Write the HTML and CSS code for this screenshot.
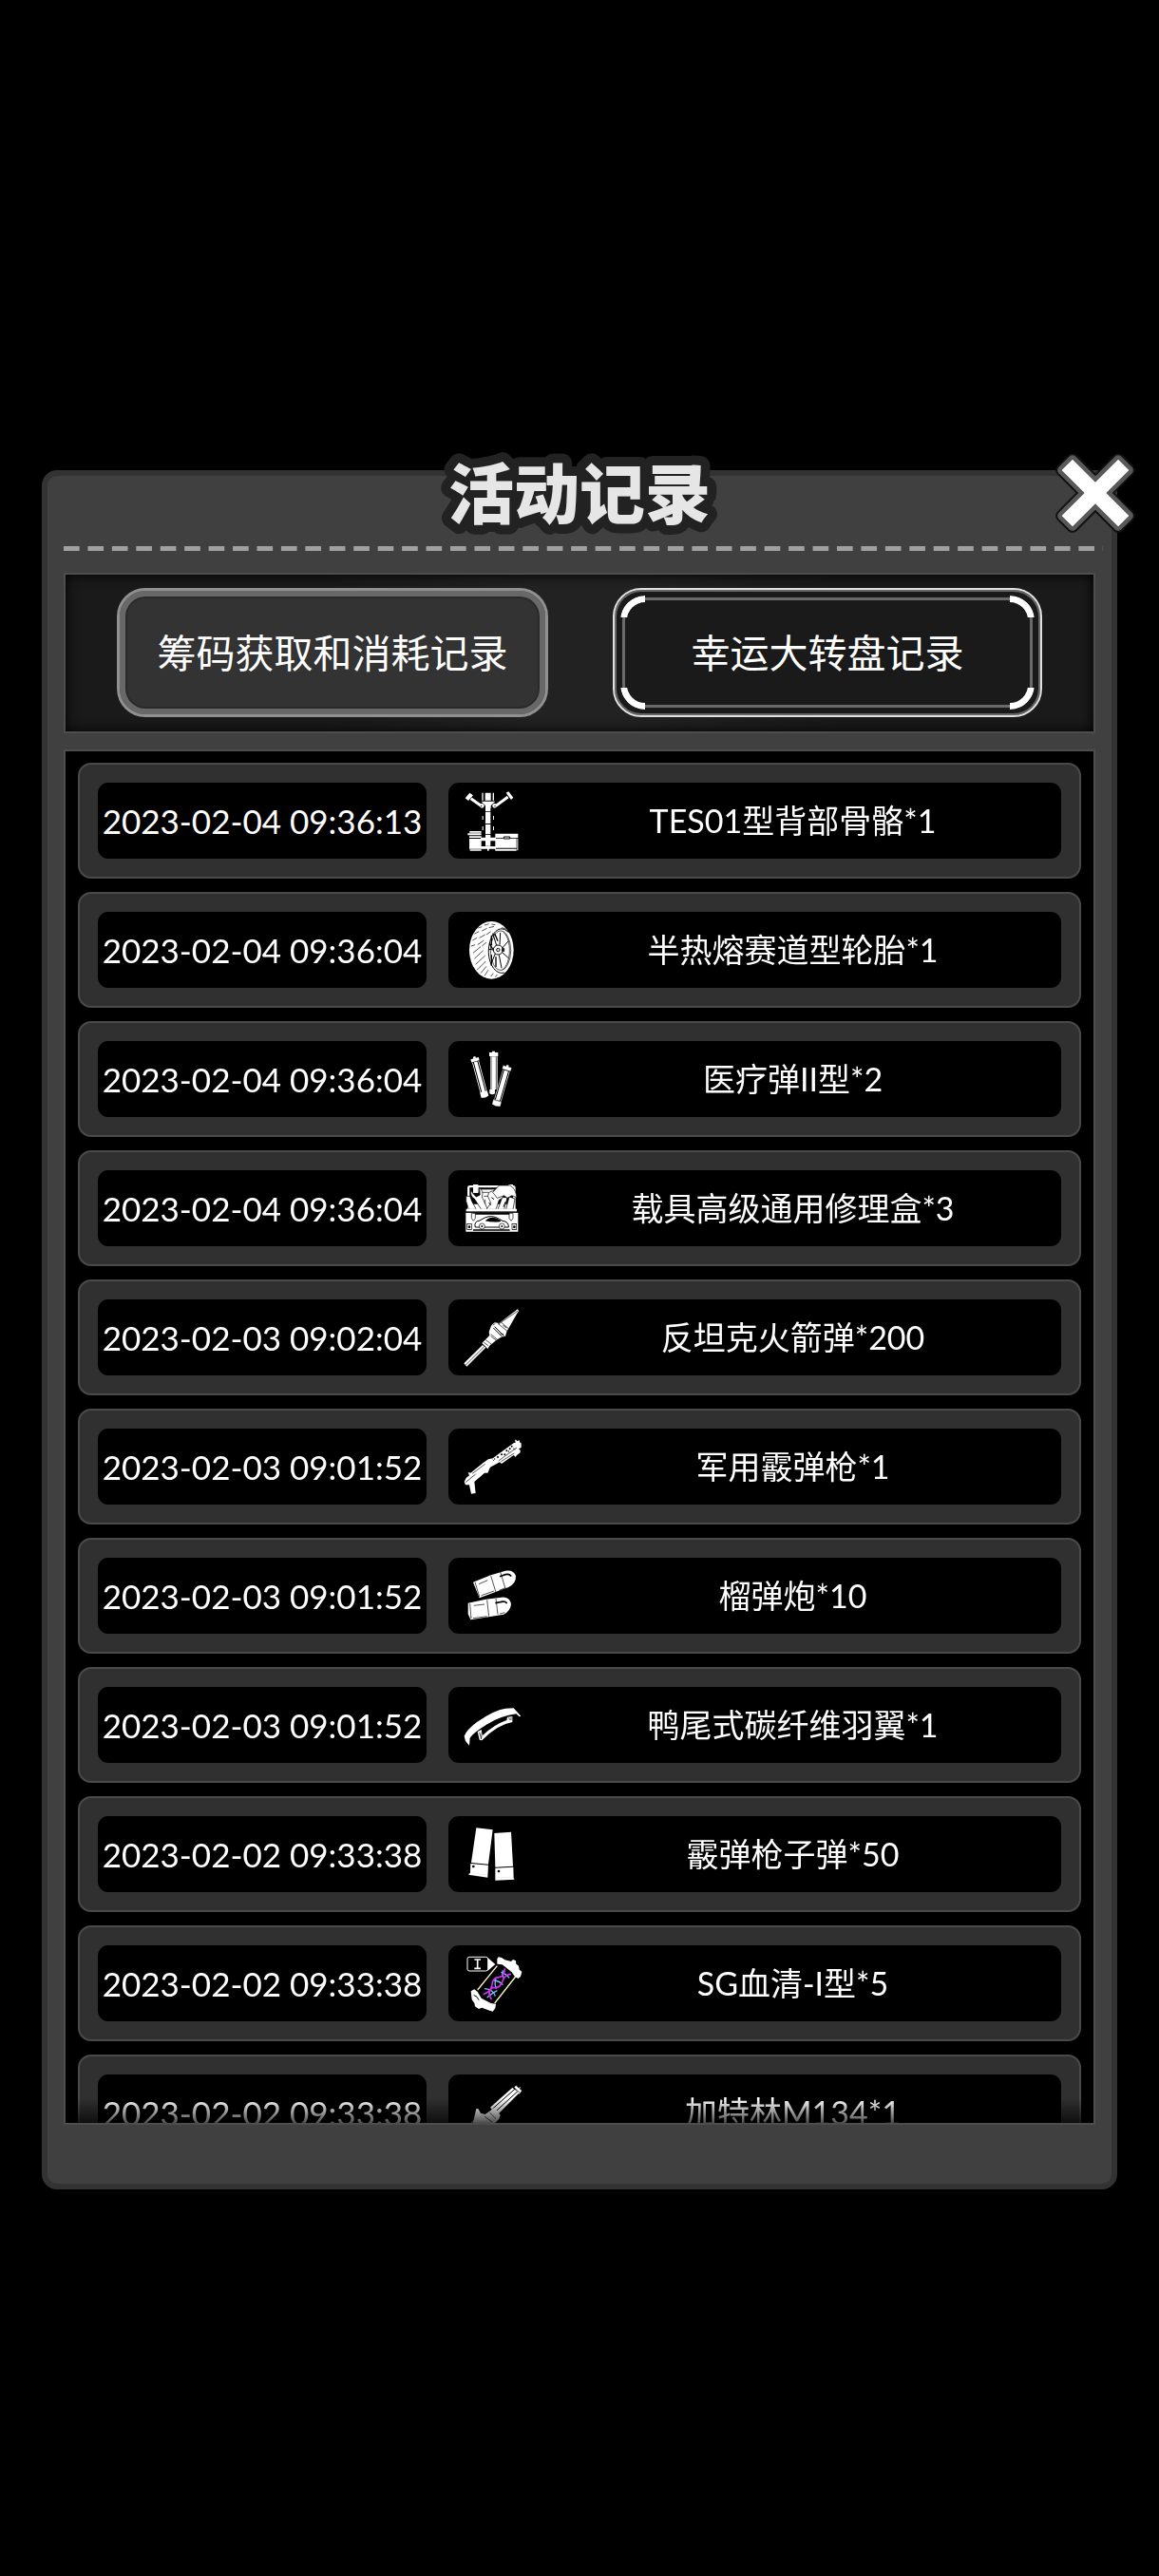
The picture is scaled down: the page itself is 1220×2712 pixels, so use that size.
FILE: index.html
```html
<!DOCTYPE html>
<html lang="zh-CN">
<head>
	<meta charset="UTF-8">
	<meta name="viewport" content="width=device-width, initial-scale=1">
	<title>活动记录</title>
	<link rel="stylesheet" href="styles.css">
</head>
<body>
	<main class="panel">
		<h1 class="title">
			<svg width="100%" height="38"><text x="50%" y="45" text-anchor="middle">活动记录</text></svg>
		</h1>
		<button class="close" aria-label="关闭">
			<svg viewBox="-42 -42 84 84" width="84" height="84">
				<g transform="rotate(45)" stroke-linejoin="round">
					<path d="M-8-42H8V-8H42V8H8V42H-8V8H-42V-8H-8Z" fill="#111" stroke="#111" stroke-width="13"/>
					<path d="M-8-42H8V-8H42V8H8V42H-8V8H-42V-8H-8Z" fill="#555" stroke="#595959" stroke-width="9"/>
					<path d="M-8-42H8V-8H42V8H8V42H-8V8H-42V-8H-8Z" fill="#fff"/>
				</g>
			</svg>
		</button>
		<div class="dashes"></div>

		<div class="tabs">
			<button class="tab tab-plain">筹码获取和消耗记录</button>
			<button class="tab tab-active"><span class="corners"></span>幸运大转盘记录</button>
		</div>

		<div class="list-box">
			<ul class="list">
				<li class="row">
					<time class="cell time">2023-02-04 09:36:13</time>
					<div class="cell item">
						<svg class="icon" viewBox="54 37 192 192" fill="#fff">
							<path d="M59 62 73 45 84 53 69 70ZM188 45 196 41 211 60 204 67ZM112 45h4v24h-4zM122 45h18v24h-18zM146 45h4v24h-4zM110 72h44l-14 14v8h-17v-8Z"/>
							<path d="M77 63 108 85M194 58 156 86" stroke="#fff" stroke-width="9"/>
							<circle cx="112" cy="86" r="7"/><circle cx="152" cy="86" r="7"/>
							<path d="M123 94h16v9h-16zM123 105h16v37h-16zM123 145h16v30h-16zM123 177h16v36h-16zM113 118h3v12h-3zM147 118h3v12h-3zM113 151h3v12h-3zM147 151h3v12h-3z"/>
							<path d="M73 166h37v5H73zM67 173h43v6H67zM72 182h38v5H72zM72 190h38v32H72zM74 224h36v4H74zM154 174h72v13h-72zM154 189h67v30h-67zM154 222h67v6h-67zM223 189h3v38h-3zM108 186h48v11h-48zM108 214h48v8h-48zM129 220h5v8h-5z"/>
							<path d="M181 184h19v6h-19z" stroke="#000" stroke-width="3"/>
							<circle cx="110" cy="87" r="2" fill="#000"/><circle cx="153" cy="87" r="2" fill="#000"/>
						</svg>
						<span class="name">TES01型背部骨骼*1</span>
					</div>
				</li>
				<li class="row">
					<time class="cell time">2023-02-04 09:36:04</time>
					<div class="cell item">
						<svg class="icon" viewBox="54 40 192 192">
							<ellipse cx="142" cy="137" rx="70" ry="91" fill="#fff"/>
							<g fill="none" stroke="#000" stroke-width="3">
								<path d="M196 80C168 52 136 84 133 136c-2 40 20 80 50 72"/>
								<ellipse cx="171" cy="138" rx="32" ry="62" stroke-width="2"/>
								<path d="M180 80c26 24 26 96-4 120" stroke-width="2"/>
								<path d="M100 67l12-4M120 58l14-4M142 55l12 2M88 86l14-8M112 76l16-8M134 66l16-4M82 106l14-8M104 98l18-10M126 88l14-10M78 124l12-4M98 120l20-14M84 146l24-20M112 124l14-12M88 164l28-26M92 182l30-28M96 200l28-28M108 210l18-22M120 218l12-18M140 220l8-10M154 222l6-8M174 66l14 4M186 74l10 6" stroke-width="2"/>
								<path d="M158 122 146 84M168 120l2-38M176 130l20-22M176 144l20 18M166 152l8 42M154 148l-14 34M148 136l-14-2"/>
								<path d="M142 90v32M136 116l10 18M142 152v34M152 84l10 24M156 158v32" stroke-width="4"/>
								<circle cx="163" cy="136" r="15"/>
								<circle cx="163" cy="136" r="5"/>
								<path d="M176 132h6v8h-6z"/>
							</g>
						</svg>
						<span class="name">半热熔赛道型轮胎*1</span>
					</div>
				</li>
				<li class="row">
					<time class="cell time">2023-02-04 09:36:04</time>
					<div class="cell item">
						<svg class="icon" viewBox="54 43 192 192" fill="#fff">
							<path d="M144 51h9v4h10v12h-28V55h9zM138 68h23v104h-23zM136 172h17v13q-8 6-17 0z"/>
							<path d="M141 68v104M157 68v104" stroke="#000" stroke-width="2"/>
							<g transform="rotate(-15 105 134)">
								<path d="M101 66h8v5h9v10H92V71h9zM94 83h22v98H94zM93 181h24v16q-12 6-24 0z"/>
								<path d="M98 82v98M112 82v98" stroke="#000" stroke-width="3"/>
							</g>
							<g transform="rotate(16 175 160)" stroke="#000">
								<path d="M171 92h8v5h10v12h-28V97h10zM163 110h24v100h-24zM161 208h27v17q-13 5-27 0z"/>
								<path d="M167 110v98M183 110v98" stroke-width="3"/>
							</g>
						</svg>
						<span class="name">医疗弹II型*2</span>
					</div>
				</li>
				<li class="row">
					<time class="cell time">2023-02-04 09:36:04</time>
					<div class="cell item">
						<svg class="icon" viewBox="54 46 192 192" fill="#fff">
							<path d="M66 76q0-6 8-6h136q8 0 8 6v72H66Z"/>
							<path d="M73 77h11v16h16V77h96v16h14v36H73Z" fill="#000"/>
							<path d="M84 67h16v26H84zM196 67h14v22h-14zM104 82h48l-12 22 8 40H108Z"/>
							<path d="M104 82h46M112 92h22M118 104h14M122 114v20" stroke="#000" stroke-width="2"/>
							<g stroke="#000" stroke-width="2">
								<path d="M78 86q-5 18 10 26l22 34h20l-18-40q6-18-8-28l2 22-12 6-10-10Z"/>
								<path d="M62 104h12l6 16 14 26H70l-8-26Z"/>
								<path d="M134 92q-8 12 2 24l4 10-14 20h30l10-30q14-4 16-20l-14 6-8-6 6-16Z"/>
								<path d="M176 108h16l-10 38h-20ZM198 106l18 6-6 34h-22Z"/>
								<path d="M146 92 166 70h34q18 8 22 38l-16-6-14 8-10-8-22 8Z"/>
							</g>
							<path d="M134 124l6 8M142 108l8 6M186 122l-6 16" stroke="#000" stroke-width="3"/>
							<path d="M62 144h160v9H62zM61 156h165v60H61z"/>
							<path d="M62 154h162" stroke="#000" stroke-width="3"/>
							<path d="M84 156h116v6H84zM84 209h116v4H84zM64 190h16v20H64zM206 190h16v20h-16z" fill="#000"/>
							<path d="M66 192h12v16H66zM208 192h12v16h-12z"/>
							<circle cx="72" cy="201" r="4" fill="#000"/><circle cx="214" cy="201" r="4" fill="#000"/>
							<path d="M79 158h12v16l-6 8-6-8zM198 158h12v16l-6 8-6-8z" stroke="#000" stroke-width="2"/>
							<path d="M91 202q-6-18 14-21l16-9q22-10 46 4l10 6q20 2 19 20Z" stroke="#000" stroke-width="3"/>
							<path d="M122 182 132 174q18-8 38 6l2 4q-24 4-50-2Z" fill="#000"/>
							<g stroke="#000" stroke-width="2"><circle cx="112" cy="199" r="9"/><circle cx="175" cy="199" r="9"/></g>
							<circle cx="112" cy="199" r="3" fill="#000"/><circle cx="175" cy="199" r="3" fill="#000"/>
						</svg>
						<span class="name">载具高级通用修理盒*3</span>
					</div>
				</li>
				<li class="row">
					<time class="cell time">2023-02-03 09:02:04</time>
					<div class="cell item">
						<svg class="icon" viewBox="54 46 192 192" fill="#fff">
							<path d="M55 224 114 166 124 174 64 234ZM112 160 136 136 134 124 142 104 152 95 166 97 218 58 224 53 229 58 222 68 190 124 186 138 170 143 156 152 136 168 130 178 122 170Z"/>
							<g fill="none" stroke="#000" stroke-width="2">
								<path d="M60 230 120 170M118 158l14 10M124 150l18 14M140 138l18 14M140 132l22 18" />
								<path d="M148 112 178 142M152 108 182 138" stroke-width="3"/>
								<path d="M162 98 192 122M172 94 196 114M164 100 226 58"/>
								<path d="M146 104l8-6M170 130l10 2M178 104l12 8"/>
							</g>
						</svg>
						<span class="name">反坦克火箭弹*200</span>
					</div>
				</li>
				<li class="row">
					<time class="cell time">2023-02-03 09:01:52</time>
					<div class="cell item">
						<svg class="icon" viewBox="54 454 192 192" fill="#fff">
							<path d="M68 568 76 570 116 538 132 527 146 524 212 476 218 474 216 465 220 465 222 470 230 467 232 474 236 476V490L228 494 233 498V506L222 514 218 520 212 514 174 541 168 536 138 552 130 570 120 570 88 598 92 634 78 636 72 608H60L56 598 62 586 72 578Z"/>
							<g fill="none" stroke="#000" stroke-width="2">
								<path d="M82 572 122 542M60 600 92 574M164 532 222 490M172 534 214 508"/>
								<path d="M146 528 150 532M210 492l8 4"/>
							</g>
							<g fill="#000"><circle cx="162" cy="520" r="3"/><circle cx="174" cy="512" r="3"/><circle cx="184" cy="512" r="3"/><circle cx="190" cy="500" r="3"/><circle cx="200" cy="494" r="3"/><circle cx="206" cy="486" r="3"/><circle cx="152" cy="526" r="2"/><circle cx="196" cy="502" r="2"/></g>
						</svg>
						<span class="name">军用霰弹枪*1</span>
					</div>
				</li>
				<li class="row">
					<time class="cell time">2023-02-03 09:01:52</time>
					<div class="cell item">
						<svg class="icon" viewBox="54 37 192 192" fill="#fff">
							<path d="M84 90 140 68 186 54Q212 50 219 70 220 94 196 106L104 140Z"/>
							<path d="M68 156 124 144 174 138Q200 136 204 160 202 182 180 192L76 209 68 190Z"/>
							<g fill="none" stroke="#000" stroke-width="2">
								<path d="M90 90 104 136M140 70 156 122M170 58 186 110M102 96 130 84M110 132 150 118M166 116l20-8M74 158l4 48M128 146l6 52M156 142l6 50M86 164l34-4M84 204l44-6M168 190l16-4"/>
								<path d="M168 72 186 66Q200 62 204 72M154 156 174 152Q190 150 190 158" stroke-width="5"/>
							</g>
						</svg>
						<span class="name">榴弹炮*10</span>
					</div>
				</li>
				<li class="row">
					<time class="cell time">2023-02-03 09:01:52</time>
					<div class="cell item">
						<svg class="icon" viewBox="54 445 192 192" fill="#fff">
							<path d="M56 576Q64 556 96 532 150 494 186 489L212 488 235 513 230 515 220 506Q172 512 126 540 84 566 74 582L72 606 60 592Z"/>
							<path d="M98 562 110 556 114 574Q150 540 190 526L192 516 208 514 208 532Q160 540 112 590L104 588Z"/>
							<path d="M104 564l6 22M112 562l-2 22M196 518l6 8M204 516v10" stroke="#000" stroke-width="2"/>
						</svg>
						<span class="name">鸭尾式碳纤维羽翼*1</span>
					</div>
				</li>
				<li class="row">
					<time class="cell time">2023-02-02 09:33:38</time>
					<div class="cell item">
						<svg class="icon" viewBox="54 28 192 192" fill="#fff">
							<path d="M94 41 146 47 132 156 78 151ZM76 154 132 159 130 198 70 189V186L75 184ZM151 58 204 54 210 162 154 165ZM154 168 211 165 212 200 215 204 154 207Z"/>
							<circle cx="85" cy="163" r="4" fill="#000"/><circle cx="165" cy="178" r="4" fill="#000"/>
							<path d="M79 182 130 190M156 199 211 196" stroke="#ccc"/>
						</svg>
						<span class="name">霰弹枪子弹*50</span>
					</div>
				</li>
				<li class="row">
					<time class="cell time">2023-02-02 09:33:38</time>
					<div class="cell item">
						<svg class="icon" viewBox="54 433 192 192" fill="none">
							<path d="M72 446H124Q130 446 132 452V484Q130 490 124 490H72Q66 490 66 484V452Q66 446 72 446Z" stroke="#fff" stroke-width="3"/>
							<path d="M130 448 154 469 130 490Z" fill="#fff"/>
							<path d="M88 454h20M88 482h20M98 454v28" stroke="#fff" stroke-width="5"/>
							<path d="M160 474 98 550M218 508 152 592" stroke="#fff3c4" stroke-width="4"/>
							<path d="M160 452 164 446 174 448 184 455 204 460 210 454 219 458 220 468 228 474 230 486 238 492 234 508 226 514 216 508 206 494 176 470 160 468Z" fill="#fff"/>
							<path d="M77 554 88 548 98 556 110 576 140 592 156 594 154 608 146 618 132 614 112 606 102 610 90 602 88 592 80 580Z" fill="#fff"/>
							<path d="M86 566 96 572 102 582" stroke="#000" stroke-width="3"/>
							<path d="M120 546Q148 548 154 570M150 520Q168 522 178 534M172 494Q190 500 198 512M128 574Q144 560 160 552M156 514Q150 534 158 546M178 488Q174 500 180 512" stroke="#68c8f4" stroke-width="4"/>
							<path d="M116 564Q140 556 144 534 146 510 166 510 184 508 184 482M142 580Q126 556 146 542 170 546 176 524 184 500 204 500" stroke="#d42cf0" stroke-width="5"/>
						</svg>
						<span class="name">SG血清-I型*5</span>
					</div>
				</li>
				<li class="row">
					<time class="cell time">2023-02-02 09:33:38</time>
					<div class="cell item">
						<svg class="icon" viewBox="0 0 192 192" fill="#fff">
							<path d="M84 80 154 18 176 34 106 104Z"/>
							<path d="M92 84 164 20M100 94 172 28" stroke="#000" stroke-width="3"/>
							<path d="M160 16 168 10 172 18 180 16 178 24 184 26 176 38Z"/>
							<path d="M154 14l24 20M162 8l22 16" stroke="#000" stroke-width="2"/>
							<path d="M40 84h6l8 14 14 4 30-22 18 24-4 12-40 44-32 16-16-24Z"/>
							<path d="M50 104 16 138" stroke="#fff" stroke-width="3"/>
							<path d="M82 96l20 20M66 108l24 18" stroke="#000" stroke-width="2"/>
						</svg>
						<span class="name">加特林M134*1</span>
					</div>
				</li>
			</ul>
		</div>
	</main>
</body>
</html>
```
FILE: styles.css
```css
* {
	box-sizing: border-box;
}

body {
	display: flex;
	height: 100vh;
	margin: 0;
	padding: 495px 44px 407px;
	background-color: #000;
	color: #fff;
	font-family: Lato, 'Noto Sans CJK SC', sans-serif;
}

button {
	padding: 0;
	border: none;
	background: none;
	color: inherit;
	font: inherit;
	cursor: pointer;
}

.panel {
	position: relative;
	display: flex;
	flex: 1;
	flex-direction: column;
	min-width: 0;
	padding: 0 17px 62px;
	border: 6px solid #333;
	border-radius: 16px;
	background-color: #404040;
}

.title {
	margin: 0;
	height: 38px;
}

.title svg {
	display: block;
	overflow: visible;
}

.title text {
	fill: #e6e6e6;
	stroke: #222;
	stroke-width: 20px;
	stroke-linejoin: round;
	paint-order: stroke;
	font-family: 'Noto Sans CJK SC', sans-serif;
	font-size: 69px;
	font-weight: 900;
}

.close {
	position: absolute;
	top: -24px;
	right: -25px;
	width: 84px;
	height: 84px;
}

.close svg {
	display: block;
	overflow: visible;
}

/* 43 dashes, the last gap hangs over the edge */
.dashes {
	height: 5px;
	margin: 36px -8px 23px 0;
	background-image: linear-gradient(90deg, #a0a0a0 67%, transparent 67%);
	background-size: calc(100% / 43) 5px;
}

.tabs {
	display: flex;
	gap: 68px;
	padding: 14px 54px 15px;
	border: 2px solid #4d4d4d;
	background: linear-gradient(90deg, #1a1a1a 25%, #222 45%, #222 55%, #1a1a1a 75%);
	box-shadow: inset 0 0 14px #000;
}

.tab {
	position: relative;
	flex: 1;
	height: 136px;
	padding-bottom: 4px;
	border-radius: 30px;
	font-size: 41px;
	white-space: nowrap;
}

.tab-plain {
	border: 3px solid #909090;
	background-color: #333;
	box-shadow: inset 0 0 0 6px #686868, inset 0 0 0 8px #2a2a2a;
}

.tab-active {
	border: 2px solid #e0e0e0;
	background-color: #1a1a1a;
	box-shadow: inset 0 0 0 2px #666;
}

.tab-active::before {
	content: '';
	position: absolute;
	inset: 8px;
	border: 3px solid #6a6a6a;
	border-radius: 24px;
}

/* white arcs in the four corners */
.corners {
	position: absolute;
	inset: 6px;
	border: 7px solid #fff;
	border-radius: 26px;
	--arc: linear-gradient(#000, #000);
	mask: var(--arc) 0 0, var(--arc) 100% 0, var(--arc) 0 100%, var(--arc) 100% 100%;
	mask-size: 26px 23px;
	mask-repeat: no-repeat;
}

.list-box {
	display: flex;
	flex: 1;
	min-height: 0;
	margin-top: 17px;
	border: 2px solid #4d4d4d;
	background-color: #000;
}

.list {
	display: flex;
	flex: 1;
	flex-direction: column;
	gap: 14px;
	min-width: 0;
	margin: 0;
	padding: 12px 13px;
	overflow-y: auto;
	scrollbar-width: none;
	list-style: none;
	mask-image: linear-gradient(#000 calc(100% - 26px), rgba(0, 0, 0, .3));
}

.row {
	display: grid;
	flex-shrink: 0;
	grid-template-columns: 346fr 645fr;
	gap: 23px;
	padding: 19px;
	border: 2px solid #4a4a4a;
	border-radius: 14px;
	background-color: #303030;
}

.cell {
	display: flex;
	align-items: center;
	height: 80px;
	border-radius: 11px;
	background-color: #000;
	white-space: nowrap;
}

.time {
	justify-content: center;
	font-size: 35px;
}

.item {
	padding-left: 16px;
	font-size: 34px;
}

.icon {
	flex-shrink: 0;
	width: 64px;
	height: 64px;
}

.name {
	flex: 1;
	padding-bottom: 4px;
	text-align: center;
}
```
